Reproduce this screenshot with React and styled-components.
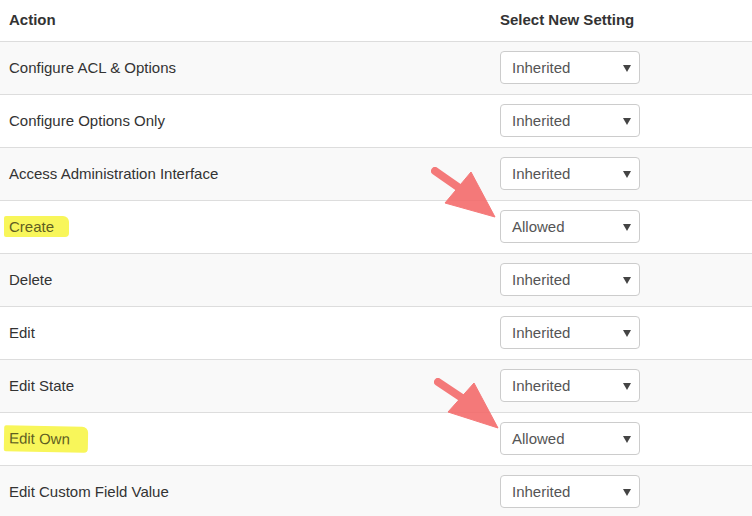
import React from "react"
import styled, { createGlobalStyle } from "styled-components"

const Global = createGlobalStyle`
  body {
    margin: 0;
    background: #fff;
    font-family: "Liberation Sans", Arial, sans-serif;
  }
`

const Page = styled.div`
  position: relative;
  width: 752px;
  height: 516px;
  overflow: hidden;
`

const Table = styled.table`
  width: 100%;
  border-collapse: collapse;
  font-size: 15px;
  color: #333;
`

const HeadCell = styled.th`
  height: 41px;
  padding: 0 9px;
  text-align: left;
  font-weight: bold;
  vertical-align: middle;
  border-bottom: 1px solid #ddd;
  width: ${(p) => p.$width || "auto"};
  box-sizing: border-box;
  padding-bottom: 2px;
`

const Row = styled.tr`
  background: ${(p) => (p.$striped ? "#f9f9f9" : "#fff")};
  border-bottom: 1px solid #ddd;
`

const Cell = styled.td`
  height: 53px;
  padding: 0 9px;
  vertical-align: middle;
  box-sizing: border-box;
`

const Marked = styled.span`
  display: inline-block;
  margin-left: -5px;
  padding: ${(p) => (p.$wide ? "4px 18px 5px 5px" : "2px 15px 2px 5px")};
  background: #f8f65a;
  color: #5f5e22;
  border-radius: 2px 6px 4px 2px;
  transform: rotate(${(p) => (p.$wide ? "1deg" : "0deg")});
`

const SelectBox = styled.div`
  display: flex;
  align-items: center;
  justify-content: space-between;
  width: 140px;
  height: 33px;
  box-sizing: border-box;
  padding: 0 8px 0 11px;
  border: 1px solid #ccc;
  border-radius: 4px;
  background: #fff;
  color: #555;
  font-size: 15px;
`

const Caret = styled.svg`
  width: 8px;
  height: 8px;
  fill: #444;
`

const Overlay = styled.svg`
  position: absolute;
  left: 0;
  top: 0;
  pointer-events: none;
`

const rows = [
  { label: "Configure ACL & Options", value: "Inherited" },
  { label: "Configure Options Only", value: "Inherited" },
  { label: "Access Administration Interface", value: "Inherited" },
  { label: "Create", value: "Allowed", mark: "short" },
  { label: "Delete", value: "Inherited" },
  { label: "Edit", value: "Inherited" },
  { label: "Edit State", value: "Inherited" },
  { label: "Edit Own", value: "Allowed", mark: "wide" },
  { label: "Edit Custom Field Value", value: "Inherited" },
]

const Arrow = ({ tail, end, head }) => (
  <g fill="#f46868" stroke="#f46868" opacity="0.88">
    <line
      x1={tail[0]}
      y1={tail[1]}
      x2={end[0]}
      y2={end[1]}
      strokeWidth="8"
      strokeLinecap="round"
    />
    <polygon points={head.map((p) => p.join(",")).join(" ")} strokeWidth="1" strokeLinejoin="round" />
  </g>
)

const App = () => (
  <Page>
    <Global />
    <Table>
      <thead>
        <tr>
          <HeadCell $width="491px">Action</HeadCell>
          <HeadCell>Select New Setting</HeadCell>
        </tr>
      </thead>
      <tbody>
        {rows.map((r, i) => (
          <Row key={r.label} $striped={i % 2 === 0}>
            <Cell>
              {r.mark ? <Marked $wide={r.mark === "wide"}>{r.label}</Marked> : r.label}
            </Cell>
            <Cell>
              <SelectBox>
                <span>{r.value}</span>
                <Caret viewBox="0 0 8 8">
                  <polygon points="0,1 8,1 4,8" />
                </Caret>
              </SelectBox>
            </Cell>
          </Row>
        ))}
      </tbody>
    </Table>
    <Overlay width="752" height="516">
      <Arrow tail={[435, 171]} end={[468, 194]} head={[[445, 203], [471, 172], [495, 217]]} />
      <Arrow tail={[438, 382]} end={[471, 404]} head={[[448, 412], [474, 383], [498, 428]]} />
    </Overlay>
  </Page>
)

export default App
